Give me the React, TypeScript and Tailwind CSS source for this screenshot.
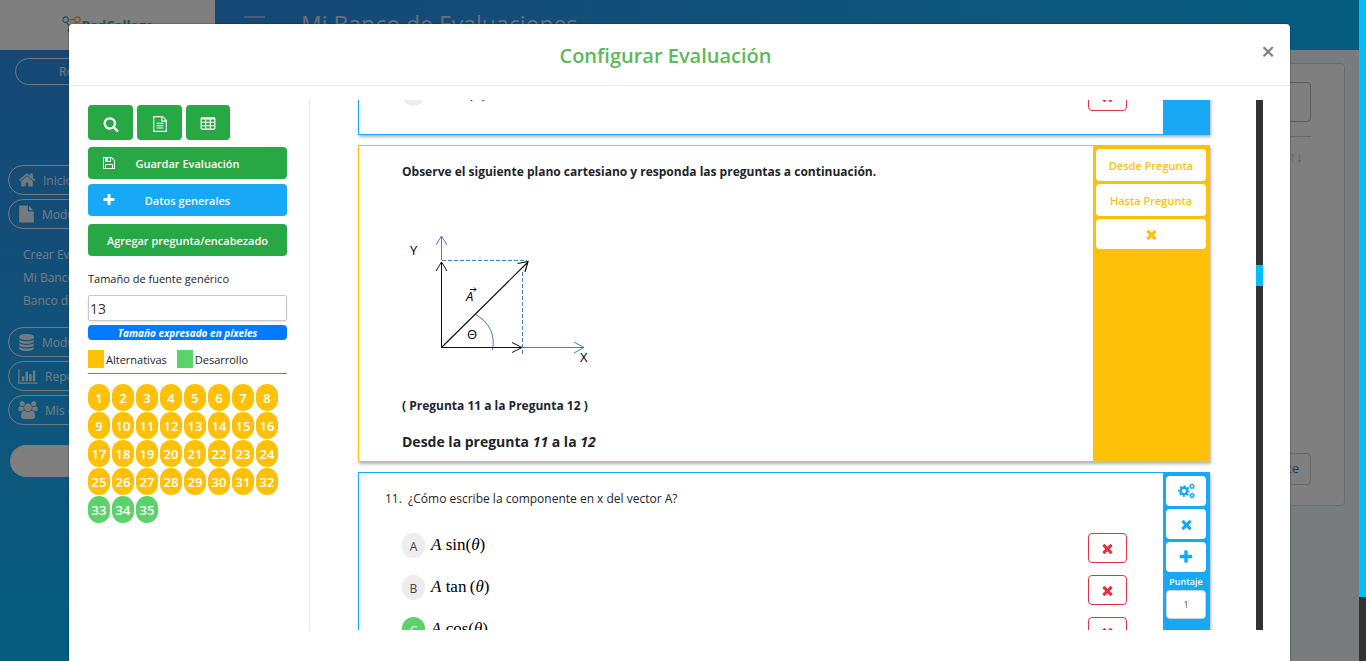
import React from "react";

const ICONS = {
  search: {
    w: 1792,
    d: "M1216 832q0-185-131.5-316.5t-316.5-131.5-316.5 131.5-131.5 316.5 131.5 316.5 316.5 131.5 316.5-131.5 131.5-316.5zm512 832q0 52-38 90t-90 38q-54 0-90-38l-343-342q-179 124-399 124-143 0-273.5-55.5t-225-150-150-225-55.5-273.5 55.5-273.5 150-225 225-150 273.5-55.5 273.5 55.5 225 150 150 225 55.5 273.5q0 220-124 399l343 343q37 37 37 90z",
  },
  times: {
    w: 1792,
    d: "M1490 1322q0 40-28 68l-136 136q-28 28-68 28t-68-28l-294-294-294 294q-28 28-68 28t-68-28l-136-136q-28-28-28-68t28-68l294-294-294-294q-28-28-28-68t28-68l136-136q28-28 68-28t68 28l294 294 294-294q28-28 68-28t68 28l136 136q28 28 28 68t-28 68l-294 294 294 294q28 28 28 68z",
  },
  plus: {
    w: 1792,
    d: "M1600 736v192q0 40-28 68t-68 28h-416v416q0 40-28 68t-68 28h-192q-40 0-68-28t-28-68v-416h-416q-40 0-68-28t-28-68v-192q0-40 28-68t68-28h416v-416q0-40 28-68t68-28h192q40 0 68 28t28 68v416h416q40 0 68 28t28 68z",
  },
  home: {
    w: 1792,
    d: "M1472 992v480q0 26-19 45t-45 19h-384v-384h-256v384h-384q-26 0-45-19t-19-45v-480q0-1 .5-3t.5-3l575-474 575 474q1 2 1 6zm223-69l-62 74q-8 9-21 11h-3q-13 0-21-7l-692-577-692 577q-12 8-24 7-13-2-21-11l-62-74q-8-10-7-23.5t11-21.5l719-599q32-26 76-26t76 26l244 204v-195q0-14 9-23t23-9h192q14 0 23 9t9 23v408l219 182q10 8 11 21.5t-7 23.5z",
  },
  save: {
    w: 1792,
    d: "M512 1536h768v-384h-768v384zm896 0h128v-896q0-14-10-38.5t-20-34.5l-281-281q-10-10-34-20t-39-10v416q0 40-28 68t-68 28h-576q-40 0-68-28t-28-68v-416h-128v1280h128v-416q0-40 28-68t68-28h832q40 0 68 28t28 68v416zm-384-928v-320q0-13-9.5-22.5t-22.5-9.5h-192q-13 0-22.5 9.5t-9.5 22.5v320q0 13 9.5 22.5t22.5 9.5h192q13 0 22.5-9.5t9.5-22.5zm640 32v928q0 40-28 68t-68 28h-1344q-40 0-68-28t-28-68v-1344q0-40 28-68t68-28h928q40 0 88 20t76 48l280 280q28 28 48 76t20 88z",
  },
  fileText: {
    w: 1792,
    d: "M1596 380q28 28 48 76t20 88v1152q0 40-28 68t-68 28h-1344q-40 0-68-28t-28-68v-1600q0-40 28-68t68-28h896q40 0 88 20t76 48zm-444-244v376h376q-10-29-22-41l-313-313q-12-12-41-22zm384 1528v-1024h-416q-40 0-68-28t-28-68v-416h-768v1536h1280zm-1024-864q0-14 9-23t23-9h704q14 0 23 9t9 23v64q0 14-9 23t-23 9h-704q-14 0-23-9t-9-23v-64zm736 224q14 0 23 9t9 23v64q0 14-9 23t-23 9h-704q-14 0-23-9t-9-23v-64q0-14 9-23t23-9h704zm0 256q14 0 23 9t9 23v64q0 14-9 23t-23 9h-704q-14 0-23-9t-9-23v-64q0-14 9-23t23-9h704z",
  },
  table: {
    w: 1792,
    d: "M224 128h1344q66 0 113 47t47 113v1088q0 66-47 113t-113 47h-1344q-66 0-113-47t-47-113v-1088q0-66 47-113t113-47zM192 384v256h384v-256zM704 384v256h384v-256zM1216 384v256h384v-256zM192 768v256h384v-256zM704 768v256h384v-256zM1216 768v256h384v-256zM192 1152v256h384v-256zM704 1152v256h384v-256zM1216 1152v256h384v-256z",
  },
  file: {
    w: 1792,
    d: "M1152 512v-472q22 14 36 28l408 408q14 14 28 36h-472zm-128 32q0 40 28 68t68 28h544v1056q0 40-28 68t-68 28h-1344q-40 0-68-28t-28-68v-1600q0-40 28-68t68-28h800v544z",
  },
  database: {
    w: 1792,
    d: "M896 768q237 0 443-43t325-127v170q0 69-103 128t-280 93.5-385 34.5-385-34.5-280-93.5-103-128v-170q119 84 325 127t443 43zm0 768q237 0 443-43t325-127v170q0 69-103 128t-280 93.5-385 34.5-385-34.5-280-93.5-103-128v-170q119 84 325 127t443 43zm0-384q237 0 443-43t325-127v170q0 69-103 128t-280 93.5-385 34.5-385-34.5-280-93.5-103-128v-170q119 84 325 127t443 43zm0-1152q208 0 385 34.5t280 93.5 103 128v128q0 69-103 128t-280 93.5-385 34.5-385-34.5-280-93.5-103-128v-128q0-69 103-128t280-93.5 385-34.5z",
  },
  chart: {
    w: 2048,
    d: "M640 896v512h-256v-512h256zm384-512v1024h-256v-1024h256zm1024 1152v128h-2048v-1536h128v1408h1920zm-640-896v768h-256v-768h256zm384-384v1152h-256v-1152h256z",
  },
  users: {
    w: 1920,
    d: "M593 896q-162 5-265 128h-134q-82 0-138-40.5t-56-118.5q0-353 124-353 6 0 43.5 21t97.5 42.5 119 21.5q67 0 133-23-5 37-5 66 0 139 81 256zm1071 637q0 120-73 189.5t-194 69.5h-874q-121 0-194-69.5t-73-189.5q0-53 3.5-103.5t14-109 26.5-108.5 43-97.5 62-81 85.5-53.5 111.5-20q10 0 43 21.5t73 48 107 48 135 21.5 135-21.5 107-48 73-48 43-21.5q61 0 111.5 20t85.5 53.5 62 81 43 97.5 26.5 108.5 14 109 3.5 103.5zm-1024-1277q0 106-75 181t-181 75-181-75-75-181 75-181 181-75 181 75 75 181zm704 384q0 159-112.5 271.5t-271.5 112.5-271.5-112.5-112.5-271.5 112.5-271.5 271.5-112.5 271.5 112.5 112.5 271.5zm576 225q0 78-56 118.5t-138 40.5h-134q-103-123-265-128 81-117 81-256 0-29-5-66 66 23 133 23 59 0 119-21.5t97.5-42.5 43.5-21q124 0 124 353zm-128-609q0 106-75 181t-181 75-181-75-75-181 75-181 181-75 181 75 75 181z",
  },
};

function Icon({ name, className }: { name: keyof typeof ICONS; className: string }) {
  const icon = ICONS[name];
  return (
    <svg viewBox={`0 0 ${icon.w} 1792`} className={className} fill="currentColor" fillRule="evenodd" aria-hidden="true">
      <path d={icon.d} />
    </svg>
  );
}

function Gear({ cx, cy, r }: { cx: number; cy: number; r: number }) {
  const tooth = (2 * Math.PI * r) / 16;
  return (
    <g fill="none" stroke="currentColor">
      <circle cx={cx} cy={cy} r={r * 0.66} strokeWidth={r * 0.5} />
      <circle cx={cx} cy={cy} r={r} strokeWidth={r * 0.35} strokeDasharray={`${tooth} ${tooth}`} strokeDashoffset={tooth / 2} />
    </g>
  );
}

function Gears() {
  return (
    <svg viewBox="0 0 18 16" className="ml-0.5 h-4 w-[18px]" aria-hidden="true">
      <Gear cx={6} cy={8} r={5} />
      <Gear cx={14} cy={3.4} r={2.7} />
      <Gear cx={14} cy={12.6} r={2.7} />
    </svg>
  );
}

function NavPill({ icon, label, iconClass }: { icon: keyof typeof ICONS; label: string; iconClass: string }) {
  return (
    <a href="#" className="flex h-[30px] items-center gap-[7px] rounded-full border border-white/90 pl-[9px] text-xs text-white/90">
      <Icon name={icon} className={iconClass} />
      <span className="pt-0.5">{label}</span>
    </a>
  );
}

function Backdrop() {
  return (
    <div className="flex h-full flex-col bg-[#f2f8f9]">
      <header className="flex h-[50px] shrink-0">
        <div className="flex w-[215px] items-start justify-center bg-white pt-4">
          <svg viewBox="0 0 22 22" className="h-5 w-5" fill="none" strokeWidth="1.2" aria-hidden="true">
            <circle cx="4" cy="4" r="3" stroke="#2f9bd6" />
            <circle cx="17" cy="4" r="3" stroke="#f0b020" />
            <circle cx="10" cy="16" r="3" stroke="#3cb44b" />
            <path d="M7 4h7" stroke="#f0b020" />
            <path d="M5 7l4 6" stroke="#2f9bd6" />
          </svg>
          <span className="pt-px text-[13px] leading-4 font-bold text-[#3cc06e]">
            Red<span className="text-[#28b8a4]">Coll</span>ege
          </span>
        </div>
        <div className="flex flex-1 items-start gap-9 bg-linear-to-r from-[#2c90ea] to-[#08bafe] pl-[29px]">
          <span className="mt-4 h-4 w-[21px] border-y-2 border-white/45" />
          <h1 className="pt-2 text-[23px] leading-8 text-white/75">Mi Banco de Evaluaciones</h1>
        </div>
      </header>
      <div className="flex min-h-0 flex-1">
        <nav className="flex w-[215px] flex-col bg-linear-to-b from-[#2c90ea] to-[#08bafe] px-2 pt-2">
          <button className="ml-[7px] h-[27px] rounded-full border border-white/90 text-left text-xs text-white/90">
            <span className="pl-[43px]">Rol</span>
          </button>
          <div className="mt-20 flex flex-col gap-1">
            <NavPill icon="home" label="Inicio" iconClass="h-[18px] w-[18px]" />
            <NavPill icon="file" label="Modulo" iconClass="h-[18px] w-[17px]" />
          </div>
          <div className="mt-[14px] mb-[15px] flex flex-col pl-[15px] text-xs leading-[23px] text-white/90">
            <a href="#">Crear Evaluación</a>
            <a href="#">Mi Banco</a>
            <a href="#">Banco de</a>
          </div>
          <div className="flex flex-col gap-1">
            <NavPill icon="database" label="Modulo" iconClass="h-[17px] w-[17px]" />
            <NavPill icon="chart" label="Reportes" iconClass="h-[17px] w-5" />
            <NavPill icon="users" label="Mis datos" iconClass="h-[18px] w-5" />
          </div>
          <div className="mt-5 ml-[2px] h-8 rounded-full bg-white" />
        </nav>
        <main className="flex-1 pt-[13px] pr-[21px] pl-[14px]">
          <section className="flex h-[443px] flex-col items-end rounded border border-[#d8d8d8] bg-white pt-[18px] pr-[33px]">
            <div className="h-10 w-48 rounded border border-[#bbb]" />
            <div className="mt-[14px] h-px w-48 bg-[#ccc]" />
            <span className="mt-[10px] mr-2 text-sm font-bold text-[#b8c2f0]">↑↓</span>
            <button className="mt-auto mb-5 h-8 rounded border border-[#ccc] px-[11px] text-[13px] text-[#2f7fd8]">Siguiente</button>
          </section>
        </main>
      </div>
    </div>
  );
}

function Sidebar() {
  const numbers = Array.from({ length: 35 }, (_, i) => i + 1);
  return (
    <aside className="flex w-[241px] shrink-0 flex-col border-r border-[#e5e7ea] pt-[5px] pr-[22px] pl-[19px] text-[11px]">
      <div className="flex gap-1">
        {(["search", "fileText", "table"] as const).map((name) => (
          <button key={name} aria-label={name} className="flex h-[35px] w-[45px] items-center justify-center rounded bg-[#28a745] pt-0.5 text-white last:w-11">
            <Icon name={name} className="h-4 w-4" />
          </button>
        ))}
      </div>
      <button className="mt-[7px] flex h-8 items-center rounded bg-[#28a745] font-semibold text-white">
        <Icon name="save" className="ml-[14px] h-[14px] w-[14px]" />
        <span className="flex-1 pt-0.5 pr-7 text-center">Guardar Evaluación</span>
      </button>
      <button className="mt-[5px] flex h-8 items-center rounded bg-[#17a9f5] font-semibold text-white">
        <Icon name="plus" className="ml-[14px] h-[14px] w-[14px]" />
        <span className="flex-1 pt-0.5 pr-7 text-center">Datos generales</span>
      </button>
      <button className="mt-2 h-8 rounded bg-[#28a745] pt-0.5 font-semibold text-white">Agregar pregunta/encabezado</button>
      <label htmlFor="font-size" className="mt-[15px] leading-4 text-[#212529]">
        Tamaño de fuente genérico
      </label>
      <input
        id="font-size"
        defaultValue="13"
        className="mt-2 h-[26px] w-full rounded-xs border border-[#c8c8c8] px-px text-sm text-[#333] shadow-sm"
      />
      <span className="mt-1 h-[15px] rounded bg-[#007bff] text-center text-[10px] leading-4 font-bold text-white italic">
        Tamaño expresado en píxeles
      </span>
      <div className="mt-[10px] flex items-center gap-[2px] border-b border-[#17a2e8] pb-[5px] leading-[18px] text-[#212529]">
        <span className="h-[18px] w-4 bg-[#ffc107]" />
        <span className="mr-2 h-[18px] pt-px">Alternativas</span>
        <span className="h-[18px] w-4 bg-[#5cd26a]" />
        <span className="h-[18px] pt-px">Desarrollo</span>
      </div>
      <div className="mt-[10px] flex flex-wrap gap-x-[2px] gap-y-px">
        {numbers.map((n) => (
          <button
            key={n}
            className={
              n > 32
                ? "h-[27px] w-[22px] rounded-full bg-[#5cd26a] text-[13px] leading-4 font-semibold text-white"
                : "h-[27px] w-[22px] rounded-full bg-[#ffc107] text-[13px] leading-4 font-semibold text-white"
            }
          >
            {n}
          </button>
        ))}
      </div>
    </aside>
  );
}

function Option({ letter, fn, correct }: { letter: string; fn: string; correct?: boolean }) {
  return (
    <div className="flex h-[30px] items-start">
      <span
        className={
          correct
            ? "h-[25px] w-[23px] rounded-full bg-[#5cd26a] text-center text-xs leading-[27px] text-white"
            : "h-[25px] w-[23px] rounded-full bg-[#ededed] text-center text-xs leading-[27px] text-[#3f4347]"
        }
      >
        {letter}
      </span>
      <span className="ml-[6px] flex-1 font-['Liberation_Serif',serif] text-[17px] leading-6 text-black">
        <i>A</i> {fn}(<i>θ</i>)
      </span>
      <button
        aria-label={`Eliminar ${letter}`}
        className="flex h-[30px] w-[39px] items-center justify-center rounded border border-[#dc3545] text-[#dc3545]"
      >
        <Icon name="times" className="h-[15px] w-[15px]" />
      </button>
    </div>
  );
}

function VectorDiagram() {
  return (
    <svg viewBox="0 0 200 150" className="mt-11 h-[150px] w-[200px]" fill="none" role="img" aria-label="Plano cartesiano">
      <g stroke="#4a7ebb">
        <path d="M39.5 35V12M34 20l5.5-9 5.5 9" />
        <path d="M120 122.500H182M172 117l10 5.500-10 5.500" />
        <path d="M40 35.500H125M120.500 47V130" strokeDasharray="4 2" />
        <path d="M73 89Q95 102 90.500 125" />
      </g>
      <g stroke="#111">
        <path d="M39.500 122.500V37M34 46l5.500-9 5.500 9" />
        <path d="M39.500 122.500H119M110 117.500l10 5-10 5" />
        <path d="M39.500 122.500L126 37M115.500 38.500l10.500-2-3 10.500" strokeWidth="1.2" />
        <path d="M68 64.500h6m-2-2l2 2-2 2" />
      </g>
      <g fill="#000" fontFamily="'Open Sans', sans-serif" fontSize="13" fontWeight="400">
        <text x="8" y="30">Y</text>
        <text x="178" y="137">X</text>
        <text x="65" y="114">Θ</text>
        <text x="64" y="76" fontStyle="italic">A</text>
      </g>
    </svg>
  );
}

const sideButton = "flex h-[30px] shrink-0 items-center justify-center rounded bg-white";

function Questions() {
  return (
    <div className="-mt-[31px] flex min-w-0 flex-1 flex-col gap-[10px] pr-[46px] pl-12">
      <article className="flex shrink-0 border border-[#17a9f5] shadow-[1px_2px_3px_rgba(0,0,0,0.3)]">
        <div className="flex-1 pt-[11px] pr-9 pb-[23px] pl-[43px]">
          <Option letter="D" fn="sec" />
        </div>
        <div className="w-[46px] bg-[#17a9f5]" />
      </article>

      <article className="flex shrink-0 border border-[#ffc107] text-[#212529] shadow-[1px_2px_3px_rgba(0,0,0,0.3)]">
        <div className="flex h-[315px] flex-1 flex-col pl-[43px] text-xs font-bold">
          <p className="mt-[17px] leading-[18px]">Observe el siguiente plano cartesiano y responda las preguntas a continuación.</p>
          <VectorDiagram />
          <p className="mt-[22px] leading-[18px]">( Pregunta 11 a la Pregunta 12 )</p>
          <p className="mt-[18px] text-sm leading-[18px]">
            Desde la pregunta <i>11</i> a la <i>12</i>
          </p>
        </div>
        <div className="flex w-[116px] flex-col gap-[3px] bg-[#ffc107] p-[3px] text-[11px] font-semibold text-[#ffc107]">
          <button className="h-8 rounded bg-white pt-0.5">Desde Pregunta</button>
          <button className="h-8 rounded bg-white pt-0.5">Hasta Pregunta</button>
          <button aria-label="Eliminar encabezado" className={sideButton}>
            <Icon name="times" className="h-[15px] w-[15px]" />
          </button>
        </div>
      </article>

      <article className="flex shrink-0 border border-[#17a9f5] shadow-[1px_2px_3px_rgba(0,0,0,0.3)]">
        <div className="flex flex-1 flex-col pr-9 pl-[26px]">
          <p className="mt-[17px] text-xs leading-[18px] text-[#212529]">11. &nbsp;¿Cómo escribe la componente en x del vector A?</p>
          <div className="mt-[25px] flex flex-col gap-3 pb-6 pl-[17px]">
            <Option letter="A" fn="sin" />
            <Option letter="B" fn={"tan\u2009"} />
            <Option letter="C" fn="cos" correct />
            <Option letter="D" fn="sec" />
          </div>
        </div>
        <div className="flex w-[46px] flex-col gap-[3px] bg-[#17a9f5] p-[3px] text-[#17a9f5]">
          <button aria-label="Configurar" className={sideButton}>
            <Gears />
          </button>
          <button aria-label="Eliminar" className={sideButton}>
            <Icon name="times" className="h-[15px] w-[15px]" />
          </button>
          <button aria-label="Agregar" className={sideButton}>
            <Icon name="plus" className="h-4 w-4" />
          </button>
          <label htmlFor="score" className="h-3 text-center text-[9px] leading-[14px] font-semibold text-white">
            Puntaje
          </label>
          <input id="score" defaultValue="1" className="h-[29px] w-full rounded border border-[#ced4da] bg-white text-center text-[9px] text-[#495057]" />
        </div>
      </article>
    </div>
  );
}

export default function App() {
  return (
    <div className="relative h-screen overflow-hidden font-['Open_Sans','Noto_Sans',sans-serif]">
      <Backdrop />
      <div className="absolute inset-0 flex bg-black/50">
        <div role="dialog" aria-labelledby="dialog-title" className="mt-6 mr-[69px] ml-[69px] flex min-w-0 flex-1 flex-col rounded-t bg-white shadow-[0_0_2px_rgba(0,0,0,0.5)]">
          <div className="flex h-[62px] shrink-0 items-center border-b border-[#e9ecef] pl-4">
            <h2 id="dialog-title" className="flex-1 pt-0.5 text-center text-xl font-semibold text-[#5cb85c]">
              Configurar Evaluación
            </h2>
            <button aria-label="Cerrar" className="w-11 pb-2 text-2xl leading-6 font-semibold text-[#7f7f7f]">
              ×
            </button>
          </div>
          <div className="mt-[14px] mb-[31px] flex min-h-0 flex-1 overflow-hidden">
            <Sidebar />
            <Questions />
            <div className="mr-[27px] flex w-[7px] shrink-0 flex-col bg-[#333] pt-[165px]">
              <div className="h-[21px] bg-[#00bfff]" />
            </div>
          </div>
        </div>
        <div className="h-full w-[7px] shrink-0 bg-[#333]">
          <div className="h-[597px] bg-[#00bfff]" />
        </div>
      </div>
    </div>
  );
}
